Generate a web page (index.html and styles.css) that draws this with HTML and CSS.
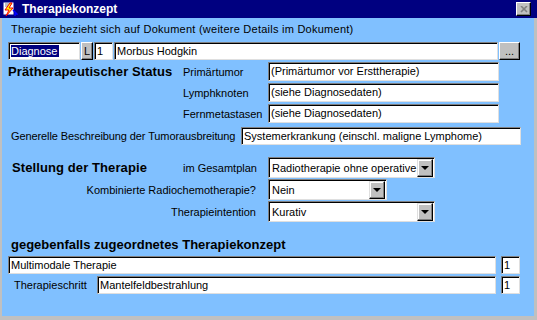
FILE: index.html
```html
<!DOCTYPE html>
<html lang="de">
<head>
  <meta charset="UTF-8" />
  <title>Therapiekonzept</title>
  <link rel="stylesheet" href="styles.css">
</head>
<body>
  <div class="window">

    <!-- Title bar -->
    <div class="titlebar">
      <svg class="app-icon" width="16" height="16" viewBox="0 0 16 16">
        <rect x="1" y="1" width="11" height="13" fill="#fff" stroke="#000080" stroke-width="1"/>
        <path d="M3 3h7M3 5h5" stroke="#808080" stroke-width="1"/>
        <path d="M8 2 L3 9 L7 9 L4 15 L11 7 L7 7 L10 2 Z" fill="#ffff00" stroke="#ff0000" stroke-width="1"/>
        <path d="M11 9 L15 13 L13 13 L13 15" fill="none" stroke="#0000ff" stroke-width="1.5"/>
      </svg>
      <span class="title">Therapiekonzept</span>
      <div class="close-btn">
        <svg width="8" height="7" viewBox="0 0 8 7">
          <path d="M1 0 L7 6 M7 0 L1 6" stroke="#808080" stroke-width="1.6"/>
        </svg>
      </div>
    </div>

    <div class="client">
      <div class="info">Therapie bezieht sich auf Dokument (weitere Details im Dokument)</div>

      <!-- Document row -->
      <div class="doc-row">
        <div class="field w-diag"><span class="selected">Diagnose</span></div>
        <div class="btn btn-l">L</div>
        <div class="field w-num">1</div>
        <div class="field w-doc">Morbus Hodgkin</div>
        <div class="btn btn-more">...</div>
      </div>

      <!-- Prätherapeutischer Status -->
      <div class="status-grid">
        <div class="heading">Prätherapeutischer Status</div>
        <div class="label">Primärtumor</div>
        <div class="field tall">(Primärtumor vor Ersttherapie)</div>

        <div></div>
        <div class="label">Lymphknoten</div>
        <div class="field tall">(siehe Diagnosedaten)</div>

        <div></div>
        <div class="label">Fernmetastasen</div>
        <div class="field tall">(siehe Diagnosedaten)</div>
      </div>

      <div class="spread-row">
        <div class="label spread-label">Generelle Beschreibung der Tumorausbreitung</div>
        <div class="field w-spread">Systemerkrankung (einschl. maligne Lymphome)</div>
      </div>

      <!-- Stellung der Therapie -->
      <div class="plan-grid">
        <div class="heading">Stellung der Therapie</div>
        <div class="label">im Gesamtplan</div>
        <div class="combo w-long">
          <span class="combo-text">Radiotherapie ohne operative</span>
          <span class="combo-btn"><i class="arrow"></i></span>
        </div>

        <div class="label label-right">Kombinierte Radiochemotherapie?</div>
        <div class="combo w-short">
          <span class="combo-text">Nein</span>
          <span class="combo-btn"><i class="arrow"></i></span>
        </div>

        <div class="label label-right">Therapieintention</div>
        <div class="combo w-long">
          <span class="combo-text">Kurativ</span>
          <span class="combo-btn"><i class="arrow"></i></span>
        </div>
      </div>

      <!-- Zugeordnetes Therapiekonzept -->
      <div class="heading heading-concept">gegebenfalls zugeordnetes Therapiekonzept</div>
      <div class="concept-row">
        <div class="field w-concept">Multimodale Therapie</div>
        <div class="field w-num">1</div>
      </div>
      <div class="concept-row step-row">
        <div class="label step-label">Therapieschritt</div>
        <div class="field w-step">Mantelfeldbestrahlung</div>
        <div class="field w-num">1</div>
      </div>
    </div>
  </div>
</body>
</html>
```

FILE: styles.css
```css
* {
  box-sizing: border-box;
}
body {
  margin: 0;
  font-family: "Liberation Sans", Arial, sans-serif;
  font-size: 11px;
  color: #000;
  background: #c0c0c0;
}

.window {
  width: 537px;
  height: 320px;
  background: #c0c0c0;
  padding: 0 3px 4px 2px;
  display: flex;
  flex-direction: column;
  overflow: hidden;
}

/* Title bar */
.titlebar {
  height: 18px;
  margin: 0 -3px 0 -2px;
  background: #000080;
  color: #fff;
  display: flex;
  align-items: center;
  padding: 0 6px 0 2px;
}
.app-icon {
  flex: none;
}
.title {
  font-weight: bold;
  font-size: 12px;
  margin-left: 4px;
  flex: 1;
}
.close-btn {
  width: 15px;
  height: 14px;
  background: #c0c0c0;
  border: 1px solid;
  border-color: #fff #000 #000 #fff;
  box-shadow: inset -1px -1px 0 #808080;
  display: flex;
  align-items: center;
  justify-content: center;
}

.client {
  flex: 1;
  background: #80c0ff;
  padding-left: 6px;
}

.info {
  margin: 5px 0 0 3px;
  line-height: 12px;
  letter-spacing: 0.25px;
}

/* Sunken text field */
.field {
  height: 18px;
  background: #fff;
  border: 1px solid;
  border-color: #808080 #dfdfdf #dfdfdf #808080;
  box-shadow: inset 1px 1px 0 #000;
  padding: 0 0 0 2px;
  line-height: 16px;
  white-space: nowrap;
  overflow: hidden;
}
.field.tall {
  height: 19px;
  line-height: 17px;
}

.selected {
  background: #000080;
  color: #fff;
  padding-right: 2px;
}

.btn {
  height: 18px;
  background: #c0c0c0;
  border: 1px solid;
  border-color: #fff #000 #000 #fff;
  box-shadow: inset -1px -1px 0 #808080;
  text-align: center;
  line-height: 16px;
}

.doc-row {
  display: flex;
  margin-top: 7px;
  gap: 1px;
}
.w-diag { width: 72px; }
.btn-l { width: 12px; }
.w-num { width: 19px; }
.w-doc { width: 384px; }
.btn-more { width: 21px; }

.heading {
  font-weight: bold;
  font-size: 13px;
  letter-spacing: 0.1px;
}

.label {
  white-space: nowrap;
}

.status-grid {
  display: grid;
  grid-template-columns: 175px 85px 231px;
  grid-auto-rows: 19px;
  row-gap: 2px;
  margin-top: 2px;
  align-items: center;
}

.spread-row {
  display: flex;
  align-items: center;
  margin-top: 4px;
}
.spread-label {
  width: 233px;
  padding-left: 3px;
  letter-spacing: -0.1px;
}
.w-spread { width: 280px; }

/* Combo boxes */
.plan-grid {
  display: grid;
  grid-template-columns: 175px 85px auto;
  grid-auto-rows: 21px;
  row-gap: 1px;
  margin-top: 12px;
  align-items: center;
}
.plan-grid .heading {
  padding-left: 4px;
}
.label-right {
  grid-column: 1 / 3;
  text-align: right;
  padding-right: 12px;
}
.combo {
  height: 21px;
  background: #fff;
  border: 1px solid;
  border-color: #808080 #dfdfdf #dfdfdf #808080;
  box-shadow: inset 1px 1px 0 #000;
  display: flex;
  padding: 1px 1px 1px 2px;
}
.w-long { width: 167px; }
.w-short { width: 119px; }
.combo-text {
  flex: 1;
  line-height: 18px;
  padding-left: 1px;
}
.combo-btn {
  width: 16px;
  height: 18px;
  background: #c0c0c0;
  border: 1px solid;
  border-color: #dfdfdf #000 #000 #dfdfdf;
  box-shadow: inset -1px -1px 0 #808080, inset 1px 1px 0 #fff;
  display: flex;
  align-items: center;
  justify-content: center;
}
.arrow {
  width: 0;
  height: 0;
  border-left: 4px solid transparent;
  border-right: 4px solid transparent;
  border-top: 4px solid #000;
}

.heading-concept {
  margin: 15px 0 0 3px;
  line-height: 16px;
  letter-spacing: 0;
}
.concept-row {
  display: flex;
  gap: 5px;
  margin-top: 3px;
}
.w-concept { width: 488px; }
.step-row {
  margin-top: 2px;
  align-items: center;
  gap: 0;
}
.step-label {
  width: 89px;
  padding-left: 6px;
}
.w-step {
  width: 399px;
  margin-right: 5px;
}
```
